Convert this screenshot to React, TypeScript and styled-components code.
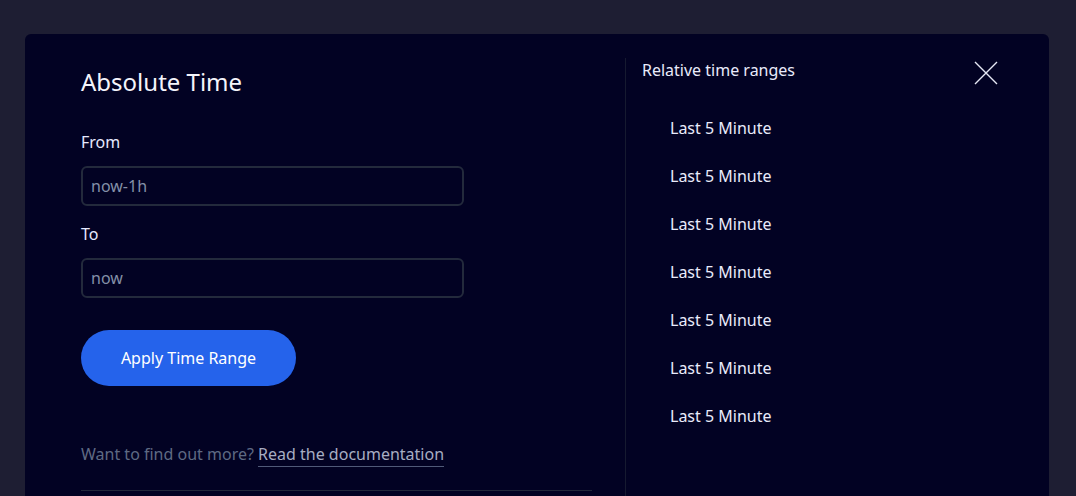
import React from "react";
import styled, { createGlobalStyle } from "styled-components";

const Global = createGlobalStyle`
  html, body { margin: 0; padding: 0; background: #1e1e33; }
  body { font-family: "Noto Sans", "Open Sans", sans-serif; overflow: hidden; }
  * { box-sizing: border-box; }
`;

const Page = styled.div`
  padding: 34px 27px 0 25px;
  height: 496px;
  overflow: hidden;
`;

const Panel = styled.div`
  background: #020223;
  border-radius: 6px 6px 0 0;
  display: flex;
  min-height: 520px;
`;

const LeftCol = styled.div`
  width: 600px;
  padding: 32px 33px 0 56px;
  display: flex;
  flex-direction: column;
`;

const Title = styled.h2`
  margin: 0 0 32px;
  font-size: 24px;
  line-height: 32px;
  font-weight: 400;
  color: #f4f4fb;
`;

const Label = styled.label`
  font-size: 16px;
  line-height: 24px;
  color: #e6e9ff;
  margin-bottom: 12px;
`;

const Input = styled.input<{ $gap?: number }>`
  width: 383px;
  height: 40px;
  border: 2px solid #232a3c;
  border-radius: 6px;
  background: transparent;
  padding: 0 8px;
  font-family: inherit;
  font-size: 16px;
  color: #e6e9ff;
  margin-bottom: ${(p) => p.$gap ?? 16}px;
  outline: none;
  &::placeholder { color: #8490a8; }
`;

const Button = styled.button`
  width: 215px;
  height: 56px;
  border: none;
  border-radius: 28px;
  background: #2563eb;
  color: #ffffff;
  font-family: inherit;
  font-size: 16px;
  margin-bottom: 56px;
  cursor: pointer;
`;

const Footer = styled.p`
  margin: 0 0 24px;
  font-size: 16px;
  line-height: 24px;
  color: #5f6a83;
`;

const DocLink = styled.a`
  color: #a7adc2;
  text-decoration: none;
  border-bottom: 1px solid #505a78;
  padding-bottom: 1px;
`;

const Divider = styled.hr`
  margin: 0;
  border: none;
  border-top: 1px solid #22283a;
`;

const RightCol = styled.div`
  flex: 1;
  margin-top: 24px;
  border-left: 1px solid #161a30;
  padding-left: 16px;
  display: flex;
  flex-direction: column;
`;

const Header = styled.div`
  display: flex;
  justify-content: space-between;
  align-items: flex-start;
  padding-right: 51px;
  margin-bottom: 19px;
`;

const HeaderText = styled.span`
  font-size: 16px;
  line-height: 24px;
  color: #e9ebfb;
`;

const Close = styled.button`
  border: none;
  background: none;
  padding: 0;
  margin-top: 3px;
  width: 24px;
  height: 24px;
  display: flex;
  cursor: pointer;
`;

const List = styled.ul`
  list-style: none;
  margin: 0;
  padding: 0;
`;

const Item = styled.li`
  height: 48px;
  display: flex;
  align-items: center;
  padding-left: 28px;
  font-size: 16px;
  color: #e9ebfb;
`;

export default function App() {
  const items = Array.from({ length: 7 }, () => "Last 5 Minute");
  return (
    <>
      <Global />
      <Page>
        <Panel>
          <LeftCol>
            <Title>Absolute Time</Title>
            <Label>From</Label>
            <Input placeholder="now-1h" />
            <Label>To</Label>
            <Input placeholder="now" $gap={32} />
            <Button>Apply Time Range</Button>
            <Footer>
              Want to find out more? <DocLink href="#">Read the documentation</DocLink>
            </Footer>
            <Divider />
          </LeftCol>
          <RightCol>
            <Header>
              <HeaderText>Relative time ranges</HeaderText>
              <Close aria-label="Close">
                <svg width="24" height="24" viewBox="0 0 24 24">
                  <path d="M1 1 L23 23 M23 1 L1 23" stroke="#e6e8f4" strokeWidth="1.4" fill="none" />
                </svg>
              </Close>
            </Header>
            <List>
              {items.map((t, i) => (
                <Item key={i}>{t}</Item>
              ))}
            </List>
          </RightCol>
        </Panel>
      </Page>
    </>
  );
}
